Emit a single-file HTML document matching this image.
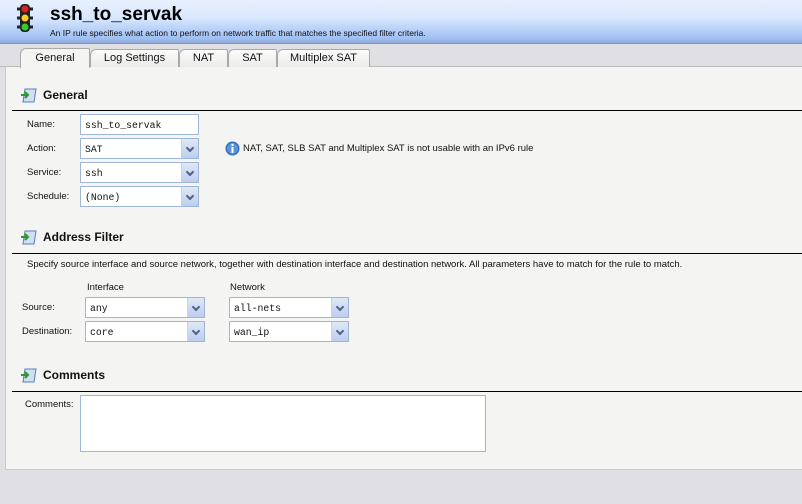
<!DOCTYPE html>
<html><head><meta charset="utf-8"><style>
*{margin:0;padding:0;box-sizing:border-box}
body{width:802px;height:504px;background:#e0dfe3;font-family:"Liberation Sans",sans-serif;position:relative;overflow:hidden;font-size:10px;color:#000}
.abs{position:absolute}
#hdr{left:0;top:0;width:802px;height:44px;background:linear-gradient(#e6f0fe 0%,#dae8fd 40%,#9fc0f4 90%,#8eabd8 100%);border-bottom:1px solid #8b95a8}
#panel{left:5px;top:66px;width:800px;height:404px;background:#f4f4f2;border-top:1px solid #bdbcbc;border-left:1px solid #c8c8c8;border-bottom:1px solid #c8c8c8}
.tab{position:absolute;top:49px;height:18px;border:1px solid #a9a9a9;border-bottom:none;background:linear-gradient(#fbfbfa,#ecebe8);font-size:11px;text-align:center;line-height:16px;color:#111;border-radius:6px 2px 0 0}
.sec{position:absolute;left:43px;font-size:12px;font-weight:bold;color:#111}
.line{position:absolute;left:12px;width:790px;height:1px;background:#000}
.lbl{position:absolute;font-size:9.5px;color:#111}
.inp{position:absolute;height:21px;border:1px solid #9fb6d9;background:#fff;font-family:"Liberation Mono",monospace;font-size:9.8px;padding:5px 0 0 4px;color:#111}
.btn{position:absolute;right:0;top:0;width:17px;height:19px;background:linear-gradient(#dfe8f7,#bccdee);border-left:1px solid #c6d3ea}
.btn:after{content:"";position:absolute;left:5px;top:6px;width:4px;height:4px;border-right:2px solid #4d6185;border-bottom:2px solid #4d6185;transform:rotate(45deg)}
.ico{position:absolute;left:20px;width:18px;height:16px}
</style></head><body>
<div id="hdr" class="abs"></div>
<svg class="abs" style="left:17px;top:3px" width="16" height="30" viewBox="0 0 16 30">
<rect x="3" y="1" width="10" height="28" rx="4" fill="#222"/>
<path d="M0 6h3M13 6h3M0 15h3M13 15h3M0 24h3M13 24h3" stroke="#222" stroke-width="3"/>
<circle cx="8" cy="6" r="3.5" fill="#d22"/><circle cx="8" cy="15" r="3.5" fill="#fc2"/><circle cx="8" cy="24" r="3.5" fill="#3c3"/></svg>
<div class="abs" style="left:50px;top:4px;font-size:19px;font-weight:bold;color:#000">ssh_to_servak</div>
<div class="abs" style="left:50px;top:28px;font-size:8.5px;color:#111">An IP rule specifies what action to perform on network traffic that matches the specified filter criteria.</div>
<div class="abs" style="left:0;top:66px;width:802px;height:1px;background:#bdbcbc"></div>
<div id="panel" class="abs"></div>
<div class="tab" style="left:90px;width:89px">Log Settings</div>
<div class="tab" style="left:179px;width:49px">NAT</div>
<div class="tab" style="left:228px;width:49px">SAT</div>
<div class="tab" style="left:277px;width:93px">Multiplex SAT</div>
<div class="tab" style="left:20px;width:70px;top:48px;height:20px;background:#f4f4f2;border-color:#a9a9a9;line-height:18px">General</div>

<svg class="ico" style="top:87px" viewBox="0 0 18 16"><path d="M5 2h11l-2 13H3z" fill="#cfe0f5" stroke="#5a7fb5"/><path d="M1 8h6M5 5l3 3-3 3" stroke="#2a9a2a" stroke-width="2" fill="none"/></svg>
<div class="sec" style="top:88px">General</div>
<div class="line" style="top:110px"></div>
<div class="lbl" style="left:27px;top:119px">Name:</div>
<div class="inp" style="left:80px;top:114px;width:119px">ssh_to_servak</div>
<div class="lbl" style="left:27px;top:143px">Action:</div>
<div class="inp" style="left:80px;top:138px;width:119px">SAT<div class="btn"></div></div>
<div class="lbl" style="left:27px;top:167px">Service:</div>
<div class="inp" style="left:80px;top:162px;width:119px">ssh<div class="btn"></div></div>
<div class="lbl" style="left:27px;top:191px">Schedule:</div>
<div class="inp" style="left:80px;top:186px;width:119px">(None)<div class="btn"></div></div>
<svg class="abs" style="left:225px;top:141px" width="15" height="15"><circle cx="7.5" cy="7.5" r="7" fill="#3a6fc0"/><circle cx="7.5" cy="7.5" r="5.5" fill="#5b93dd"/><rect x="6.5" y="6" width="2" height="6" fill="#fff"/><circle cx="7.5" cy="4" r="1.2" fill="#fff"/></svg>
<div class="lbl" style="left:243px;top:143px">NAT, SAT, SLB SAT and Multiplex SAT is not usable with an IPv6 rule</div>

<svg class="ico" style="top:229px" viewBox="0 0 18 16"><path d="M5 2h11l-2 13H3z" fill="#cfe0f5" stroke="#5a7fb5"/><path d="M1 8h6M5 5l3 3-3 3" stroke="#2a9a2a" stroke-width="2" fill="none"/></svg>
<div class="sec" style="top:230px">Address Filter</div>
<div class="line" style="top:253px"></div>
<div class="lbl" style="left:27px;top:259px">Specify source interface and source network, together with destination interface and destination network. All parameters have to match for the rule to match.</div>
<div class="lbl" style="left:87px;top:282px">Interface</div>
<div class="lbl" style="left:230px;top:282px">Network</div>
<div class="lbl" style="left:22px;top:302px">Source:</div>
<div class="inp" style="left:85px;top:297px;width:120px">any<div class="btn"></div></div>
<div class="inp" style="left:229px;top:297px;width:120px">all-nets<div class="btn"></div></div>
<div class="lbl" style="left:22px;top:326px">Destination:</div>
<div class="inp" style="left:85px;top:321px;width:120px">core<div class="btn"></div></div>
<div class="inp" style="left:229px;top:321px;width:120px">wan_ip<div class="btn"></div></div>

<svg class="ico" style="top:367px" viewBox="0 0 18 16"><path d="M5 2h11l-2 13H3z" fill="#cfe0f5" stroke="#5a7fb5"/><path d="M1 8h6M5 5l3 3-3 3" stroke="#2a9a2a" stroke-width="2" fill="none"/></svg>
<div class="sec" style="top:368px">Comments</div>
<div class="line" style="top:391px"></div>
<div class="lbl" style="left:25px;top:399px">Comments:</div>
<div class="abs" style="left:80px;top:395px;width:406px;height:57px;border:1px solid #9fb6d9;background:#fff"></div>
</body></html>
